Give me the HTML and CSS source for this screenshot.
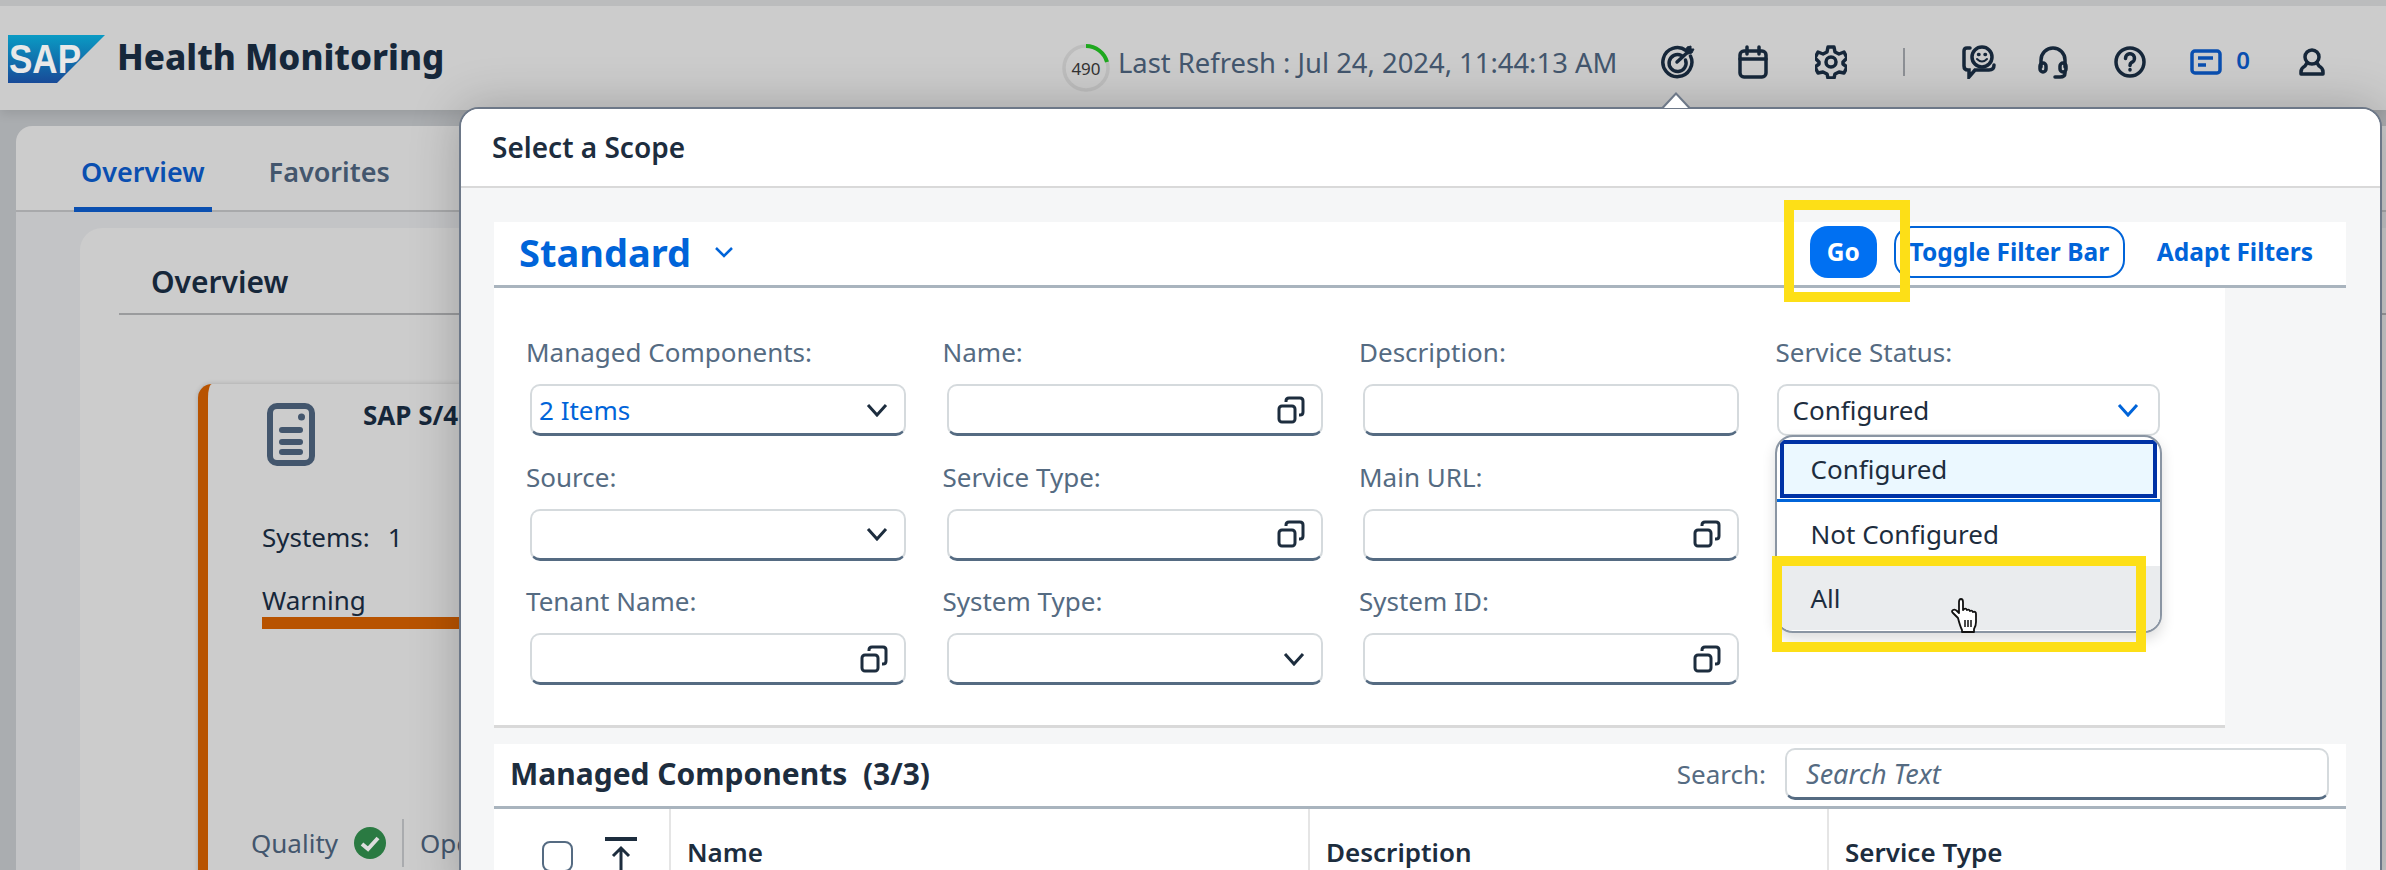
FILE: index.html
```html
<!DOCTYPE html>
<html lang="en">
<head>
    <meta charset="UTF-8">
    <meta name="viewport" content="width=device-width, initial-scale=1.0">
    <title>Health Monitoring</title>
    <link rel="stylesheet" href="styles.css">
</head>
<body>
<div class="app">
    <!-- Shell header -->
    <header class="topbar">
        <svg class="logo" viewBox="0 0 97 48" width="97" height="48">
            <defs>
                <linearGradient id="sapGrad" x1="0" y1="0" x2="0" y2="1">
                    <stop offset="0" stop-color="#0a9bc4"/>
                    <stop offset="1" stop-color="#184a98"/>
                </linearGradient>
            </defs>
            <polygon points="0,0 97,0 49,48 0,48" fill="url(#sapGrad)"/>
            <text x="1" y="38" class="logo-text" textLength="72" lengthAdjust="spacingAndGlyphs">SAP</text>
        </svg>
        <span class="app-title">Health Monitoring</span>

        <div class="refresh">
            <div class="timer">
                <svg viewBox="0 0 48 48" width="48" height="48">
                    <circle cx="24" cy="24" r="22" fill="none" stroke="#bdbdbd" stroke-width="3.5"/>
                    <path d="M24 2 A22 22 0 0 1 45 18" fill="none" stroke="#1ea81e" stroke-width="4"/>
                </svg>
                <span class="timer-num">490</span>
            </div>
            <span class="refresh-text">Last Refresh : Jul 24, 2024, 11:44:13 AM</span>
        </div>

        <nav class="actions">
            <!-- target -->
            <svg class="ico ico-target" viewBox="0 0 34 34">
                <path d="M25 5.5A14.5 14.5 0 1 0 29.5 11"/>
                <path d="M20.5 10.5A8.5 8.5 0 1 0 24.5 15"/>
                <path d="M16 17 L28 6"/>
                <path d="M25 6 L26 2 L30 1 L30 4 L33 4 L31 8 L27 9 Z" fill="#16273a" stroke-width="1"/>
            </svg>
            <!-- calendar -->
            <svg class="ico ico-cal" viewBox="0 0 30 34">
                <rect x="2" y="6" width="26" height="26" rx="4"/>
                <path d="M2 14H28M9 2V9M21 2V9"/>
            </svg>
            <!-- settings -->
            <svg class="ico ico-gear" viewBox="0 0 32 34">
                <path d="M13 2h6l1 5 4 2 5-2 3 6-4 4v2l4 3-3 6-5-1-4 2-1 4h-6l-1-4-4-2-5 1-3-6 4-3v-2l-4-4 3-6 5 2 4-2z" stroke-linejoin="round"/>
                <circle cx="16" cy="17" r="5"/>
            </svg>
            <span class="divider"></span>
            <!-- feedback -->
            <svg class="ico ico-chat" viewBox="0 0 34 34">
                <path d="M8 3H5Q2 3 2 6V21Q2 25 6 25H7V32L13 25H27Q32 25 32 20"/>
                <circle cx="20" cy="12" r="10"/>
                <path d="M15 14Q20 19 25 14" stroke-width="2"/>
                <path d="M16.500 9.500h.5M23 9.500h.5"/>
            </svg>
            <!-- headset -->
            <svg class="ico ico-head" viewBox="0 0 30 34">
                <path d="M3 22V15A12 12 0 0 1 27 15V22"/>
                <rect x="2" y="18" width="6" height="9" rx="3"/>
                <rect x="22" y="18" width="6" height="9" rx="3"/>
                <path d="M27 27V28Q27 32 22 32H17"/>
            </svg>
            <!-- help -->
            <svg class="ico ico-help" viewBox="0 0 32 32">
                <circle cx="16" cy="16" r="14"/>
                <path d="M11.500 12.500A4.500 4.500 0 1 1 17.500 16.500Q16 17.500 16 19.500"/>
                <path d="M16 23.500v.5"/>
            </svg>
            <span class="notif">
                <svg class="ico-note" viewBox="0 0 32 26">
                    <rect x="2" y="2" width="28" height="22" rx="3"/>
                    <path d="M8 9H23M8 16H16"/>
                </svg>
                <span class="notif-num">0</span>
            </span>
            <!-- user -->
            <svg class="ico ico-user" viewBox="0 0 26 28">
                <circle cx="13" cy="9" r="7"/>
                <path d="M2 26V24Q2 20 6 18L8 15M24 26V24Q24 20 20 18L18 15M2 26H24"/>
            </svg>
        </nav>
    </header>

    <!-- Page behind the popover -->
    <main class="page">
        <div class="tabs">
            <span class="tab tab-active">Overview</span>
            <span class="tab">Favorites</span>
        </div>
        <section class="tab-body">
            <div class="panel">
                <h2 class="panel-title">Overview</h2>
                <article class="sys-card">
                    <div class="sys-head">
                        <svg class="sys-icon" viewBox="0 0 48 63" width="48" height="63">
                            <rect x="3" y="3" width="42" height="57" rx="7" fill="none" stroke="#43566d" stroke-width="6"/>
                            <circle cx="34.500" cy="14" r="3.500" fill="#43566d"/>
                            <rect x="12" y="24" width="24" height="6" rx="3" fill="#43566d"/>
                            <rect x="12" y="36" width="24" height="6" rx="3" fill="#43566d"/>
                            <rect x="12" y="46" width="24" height="6" rx="3" fill="#43566d"/>
                        </svg>
                        <span class="sys-name">SAP S/4HANA</span>
                    </div>
                    <div class="sys-count"><span>Systems:</span><span>1</span></div>
                    <div class="sys-status">Warning</div>
                    <div class="sys-bar"></div>
                    <div class="sys-foot">
                        <span>Quality</span>
                        <svg viewBox="0 0 32 32" width="32" height="32">
                            <circle cx="16" cy="16" r="16" fill="#2a7a42"/>
                            <path d="M8 17L14 22L24 11" fill="none" stroke="#ddd" stroke-width="4"/>
                        </svg>
                        <span class="foot-sep"></span>
                        <span>Operations</span>
                    </div>
                </article>
            </div>
        </section>
    </main>

    <!-- Scope popover -->
    <div class="popover">
        <span class="pop-arrow"></span>
        <div class="pop-head">Select a Scope</div>
        <div class="pop-body">
            <div class="toolbar">
                <span class="variant">Standard</span>
                <svg class="variant-chev" viewBox="0 0 20 12" width="20" height="12"><path d="M2 2L10 10L18 2"/></svg>
                <span class="spacer"></span>
                <button class="btn-go">Go</button>
                <button class="btn-toggle">Toggle Filter Bar</button>
                <button class="btn-link">Adapt Filters</button>
            </div>

            <form class="filters">
                <div class="field">
                    <label>Managed Components:</label>
                    <div class="input"><span class="val-link">2 Items</span><svg class="chev"><use href="#i-chev"/></svg></div>
                </div>
                <div class="field">
                    <label>Name:</label>
                    <div class="input"><svg class="copy"><use href="#i-copy"/></svg></div>
                </div>
                <div class="field">
                    <label>Description:</label>
                    <div class="input"></div>
                </div>
                <div class="field field-open">
                    <label>Service Status:</label>
                    <div class="input input-open">
                        <span class="val">Configured</span>
                        <svg class="chev chev-blue"><use href="#i-chev"/></svg>
                    </div>
                    <ul class="dropdown">
                        <li class="opt opt-focus">Configured</li>
                        <li class="opt-line"></li>
                        <li class="opt">Not Configured</li>
                        <li class="opt opt-hover">All</li>
                    </ul>
                </div>
                <div class="field">
                    <label>Source:</label>
                    <div class="input"><svg class="chev"><use href="#i-chev"/></svg></div>
                </div>
                <div class="field">
                    <label>Service Type:</label>
                    <div class="input"><svg class="copy"><use href="#i-copy"/></svg></div>
                </div>
                <div class="field">
                    <label>Main URL:</label>
                    <div class="input"><svg class="copy"><use href="#i-copy"/></svg></div>
                </div>
                <div class="field"></div>
                <div class="field">
                    <label>Tenant Name:</label>
                    <div class="input"><svg class="copy"><use href="#i-copy"/></svg></div>
                </div>
                <div class="field">
                    <label>System Type:</label>
                    <div class="input"><svg class="chev"><use href="#i-chev"/></svg></div>
                </div>
                <div class="field">
                    <label>System ID:</label>
                    <div class="input"><svg class="copy"><use href="#i-copy"/></svg></div>
                </div>
            </form>

            <div class="table-bar">
                <span class="table-title">Managed Components&nbsp; (3/3)</span>
                <span class="spacer"></span>
                <span class="search-label">Search:</span>
                <div class="input search-input"><span class="placeholder">Search Text</span></div>
            </div>
            <div class="table-head">
                <div class="cell cell-select">
                    <span class="check"></span>
                    <svg class="top-arrow" viewBox="0 0 32 34" width="32" height="34"><path d="M0 2H32" stroke-width="4"/><path d="M16 34V11M8 19L16 11L24 19"/></svg>
                </div>
                <div class="cell">Name</div>
                <div class="cell">Description</div>
                <div class="cell">Service Type</div>
            </div>
        </div>
    </div>

    <!-- Tutorial highlights -->
    <div class="mark mark-go"></div>
    <div class="mark mark-all"></div>
    <svg class="hand" viewBox="0 0 32 36" width="32" height="36">
        <path d="M8 20L3 15Q1 13 3 12T7 13L9 15V4Q9 1 11 1T13 4V12L14 11Q16 10 17 12Q19 11 20 13Q22 12 23 14Q26 13 26 16V24Q26 28 24 31V34H12V32Q10 28 8 20Z" fill="#fff" stroke="#111" stroke-width="1.800" stroke-linejoin="round"/>
        <path d="M15 22V29M18 22V29M21 22V29" stroke="#111" stroke-width="1.500"/>
    </svg>

    <!-- shared icons -->
    <svg class="defs" width="0" height="0">
        <symbol id="i-chev" viewBox="0 0 22 14"><path d="M2 2L11 12L20 2" fill="none" stroke="currentColor" stroke-width="3"/></symbol>
        <symbol id="i-copy" viewBox="0 0 28 28">
            <rect x="2" y="10" width="16" height="16" rx="3" fill="none" stroke="currentColor" stroke-width="3"/>
            <path d="M9 6V5Q9 2 12 2H23Q26 2 26 5V16Q26 19 23 19H22" fill="none" stroke="currentColor" stroke-width="3"/>
        </symbol>
    </svg>
</div>
</body>
</html>
```
FILE: styles.css
```css
* {
    box-sizing: border-box;
}

body {
    margin: 0;
    background: #aaadb0;
    font-family: 'Noto Sans', 'Open Sans', sans-serif;
    font-size: 26px;
    color: #1d2d3e;
    overflow: hidden;
}

.app {
    position: relative;
    width: 2386px;
    height: 870px;
    overflow: hidden;
    background: #aaadb0;
}

.spacer {
    flex: 1;
}

.defs {
    position: absolute;
}

/* Header */
.topbar {
    display: flex;
    align-items: center;
    height: 110px;
    border-top: 6px solid #bbbcbd;
    background: #cccccc;
    padding: 0 61px 0 8px;
    box-shadow: 0 4px 10px rgba(0, 0, 0, 0.1);
}

.logo {
    flex: none;
    margin-top: 2px;
}

.logo-text {
    font-family: 'Liberation Sans', sans-serif;
    font-size: 40px;
    font-weight: 700;
    fill: #e8e8e8;
}

.app-title {
    margin: 0 0 0 12px;
    font-size: 35px;
    font-weight: 800;
    color: #16273a;
    position: relative;
    top: -2px;
}

.refresh {
    display: flex;
    align-items: center;
    margin-left: auto;
    gap: 8px;
    position: relative;
    top: 10px;
}

.timer {
    position: relative;
    width: 48px;
    height: 48px;
}

.timer-num {
    position: absolute;
    inset: 0;
    display: flex;
    align-items: center;
    justify-content: center;
    font-size: 17px;
    color: #333;
}

.refresh-text {
    font-size: 27.400px;
    color: #43566d;
    white-space: nowrap;
    position: relative;
    top: -6px;
}

.actions {
    display: flex;
    align-items: center;
    margin-left: 44px;
    position: relative;
    top: 4px;
}

.ico {
    fill: none;
    stroke: #16273a;
    stroke-width: 3.500;
    stroke-linecap: round;
    flex: none;
}

.ico-target { width: 34px; height: 34px; }
.ico-cal { width: 30px; height: 34px; margin-left: 43px; }
.ico-gear { width: 32px; height: 34px; margin-left: 47px; }
.ico-chat { width: 34px; height: 34px; }
.ico-head { width: 30px; height: 34px; margin-left: 42px; }
.ico-help { width: 32px; height: 32px; margin-left: 46px; }
.ico-user { width: 26px; height: 28px; margin-left: 49px; }

.divider {
    width: 2px;
    height: 28px;
    margin: 0 57px 0 56px;
    background: #8d9095;
}

.notif {
    display: flex;
    align-items: center;
    gap: 14px;
    margin-left: 44px;
    color: #0a4fb0;
    font-weight: 600;
    font-size: 24px;
}

.ico-note {
    width: 32px;
    height: 26px;
    fill: none;
    stroke: #0a4fb0;
    stroke-width: 3.500;
}

.notif-num {
    position: relative;
    top: -3px;
}

/* Page behind */
.page {
    padding: 16px 0 0 16px;
}

.tabs {
    display: flex;
    height: 86px;
    padding-left: 58px;
    background: #cccccc;
    border-radius: 16px 0 0 0;
    border-bottom: 2px solid #a8a9ab;
}

.tab {
    display: flex;
    align-items: center;
    padding: 5px 7px 0;
    margin-right: 50px;
    font-size: 27px;
    font-weight: 600;
    color: #43566d;
    height: 86px;
}

.tab-active {
    color: #0a4fb0;
    padding-top: 10px;
    border-bottom: 5px solid #0a4fb0;
}

.tab-body {
    height: 700px;
    padding: 16px 0 0 64px;
    background: #c3c4c6;
}

.panel {
    height: 100%;
    padding-top: 1px;
    background: #cccccc;
    border-radius: 22px 0 0 0;
}

.panel-title {
    margin: 0 0 0 39px;
    height: 86px;
    padding: 34px 0 0 32px;
    border-bottom: 2px solid #9a9b9d;
    font-size: 30px;
    font-weight: 600;
    line-height: 38px;
    color: #16273a;
}

.sys-card {
    display: flex;
    flex-direction: column;
    width: 900px;
    height: 600px;
    margin: 69px 0 0 118px;
    padding: 19px 0 0 59px;
    background: #cccccc;
    border-left: 10px solid #b85300;
    border-radius: 14px 0 0 0;
    box-shadow: 0 0 5px rgba(0, 0, 0, 0.18);
}

.sys-head {
    display: flex;
    align-items: flex-start;
    gap: 48px;
    height: 63px;
}

.sys-name {
    font-size: 26px;
    font-weight: 700;
    color: #16273a;
    line-height: 24px;
}

.sys-count {
    display: flex;
    gap: 18px;
    margin: 53px 0 0 -5px;
    line-height: 36px;
    color: #16273a;
}

.sys-status {
    margin: 27px 0 0 -5px;
    line-height: 36px;
    color: #16273a;
}

.sys-bar {
    height: 12px;
    margin: -1px 0 0 -5px;
    background: #b85300;
}

.sys-foot {
    display: flex;
    align-items: center;
    gap: 16px;
    margin: 190px 0 0 -16px;
    height: 48px;
    color: #43566d;
}

.foot-sep {
    width: 2px;
    height: 48px;
    background: #a9abae;
}

/* Popover */
.popover {
    position: absolute;
    left: 459px;
    top: 107px;
    width: 1923px;
    height: 790px;
    background: #f5f6f7;
    border: 2px solid #6d7888;
    border-radius: 20px 20px 0 0;
    box-shadow: 0 0 50px rgba(0, 0, 0, 0.22);
}

.pop-arrow {
    position: absolute;
    left: 1200px;
    top: -17px;
    width: 30px;
    height: 16px;
    background: #6d7888;
    clip-path: polygon(50% 0, 100% 100%, 0 100%);
}

.pop-arrow::after {
    content: "";
    position: absolute;
    left: 2px;
    top: 3px;
    width: 26px;
    height: 14px;
    background: #fff;
    clip-path: polygon(50% 0, 100% 100%, 0 100%);
}

.pop-head {
    height: 79px;
    padding: 18px 0 0 31px;
    border-radius: 18px 18px 0 0;
    border-bottom: 2px solid #d9d9d9;
    background: #fff;
    font-size: 28px;
    font-weight: 600;
    line-height: 40px;
    color: #1d2d3e;
}

.pop-body {
    display: flex;
    flex-direction: column;
    width: 1885px;
    padding: 34px 0 0 33px;
}

.toolbar {
    display: flex;
    align-items: center;
    height: 66px;
    padding: 0 33px 4px 25px;
    background: #fff;
    border-bottom: 3px solid #a9b4be;
}

.variant {
    font-size: 38px;
    font-weight: 700;
    color: #0064d9;
}

.variant-chev {
    margin-left: 23px;
    fill: none;
    stroke: #0064d9;
    stroke-width: 2.500;
}

button {
    font-family: inherit;
    font-size: 24.500px;
    font-weight: 700;
    height: 52px;
    padding: 0;
    border-radius: 18px;
    color: #0064d9;
    background: #fff;
    border: none;
}

.btn-go {
    width: 67px;
    background: #0070f2;
    color: #fff;
}

.btn-toggle {
    width: 231px;
    margin-left: 17px;
    border: 2px solid #0064d9;
}

.btn-link {
    margin-left: 32px;
}

.filters {
    display: grid;
    grid-template-columns: 416.5px 416.5px 416.5px 1fr;
    grid-auto-rows: 102px;
    row-gap: 22.500px;
    width: 1731px;
    height: 440px;
    padding: 46px 0 0 32px;
    background: #fff;
    border-bottom: 3px solid #d9d9d9;
}

.field {
    position: relative;
}

.field label {
    display: block;
    height: 50px;
    line-height: 36px;
    color: #556b82;
}

.input {
    display: flex;
    align-items: center;
    width: 376px;
    height: 52px;
    margin-left: 4px;
    padding: 0 16px 0 7px;
    background: #fff;
    border: 2px solid #d5dadd;
    border-bottom: 3px solid #556b82;
    border-radius: 10px;
    color: #1d2d3e;
}

.val-link {
    color: #0064d9;
}

.chev {
    width: 22px;
    height: 14px;
    margin-left: auto;
    color: #1d2d3e;
}

.copy {
    width: 28px;
    height: 28px;
    margin-left: auto;
    color: #1d2d3e;
}

.field-open .input-open {
    width: 383px;
    margin-left: 1px;
    padding-left: 14px;
    border-bottom-color: #d5dadd;
    border-bottom-width: 2px;
}

.chev-blue {
    color: #0064d9;
    margin-right: 3px;
}

/* Dropdown list */
.dropdown {
    position: absolute;
    left: -1px;
    top: 101px;
    z-index: 2;
    width: 387px;
    height: 198px;
    margin: 0;
    padding: 3px 0 0;
    list-style: none;
    overflow: hidden;
    background: #fff;
    border: 2px solid #8a95a3;
    border-radius: 18px;
    box-shadow: 0 6px 14px rgba(0, 0, 0, 0.14);
}

.opt {
    display: flex;
    align-items: center;
    height: 64px;
    padding-left: 34px;
    color: #1d2d3e;
}

.opt-focus {
    height: 58px;
    margin: 0 3px;
    padding-left: 27px;
    background: #ebf8ff;
    border: 4px solid #0032a5;
}

.opt-line {
    height: 3px;
    margin-top: 1px;
    background: #0064d9;
}

.opt-hover {
    background: #eaecee;
}

/* Table */
.table-bar {
    display: flex;
    align-items: center;
    height: 65px;
    margin-top: 16px;
    padding: 0 17px 3px 16px;
    background: #fff;
    border-bottom: 3px solid #a9b4be;
}

.table-title {
    font-size: 30px;
    font-weight: 700;
    color: #1d2d3e;
}

.search-label {
    margin-right: 19px;
    color: #556b82;
}

.search-input {
    width: 544px;
    margin: 0;
    padding-left: 19px;
}

.placeholder {
    font-style: italic;
    color: #556b82;
    font-size: 27px;
}

.table-head {
    display: grid;
    grid-template-columns: 175px 639px 519px 1fr;
    height: 62px;
    background: #fff;
}

.cell {
    display: flex;
    align-items: center;
    padding: 24px 0 0 16px;
    font-weight: 600;
    line-height: 30px;
    border-left: 2px solid #e5e5e5;
    color: #1d2d3e;
}

.cell-select {
    border-left: none;
    padding: 0 0 0 48px;
    gap: 32px;
}

.check {
    width: 31px;
    height: 31px;
    border: 2px solid #556b82;
    border-radius: 8px;
    position: relative;
    top: 16px;
}

.top-arrow {
    flex: none;
    fill: none;
    stroke: #1d2d3e;
    stroke-width: 3;
    position: relative;
    top: 14px;
}

/* Yellow tutorial frames */
.mark {
    position: absolute;
    z-index: 5;
    border: 10px solid #fddf17;
}

.mark-go {
    left: 1784px;
    top: 200px;
    width: 126px;
    height: 102px;
}

.mark-all {
    left: 1772px;
    top: 556px;
    width: 374px;
    height: 96px;
}

.hand {
    position: absolute;
    z-index: 6;
    left: 1950px;
    top: 598px;
}
```
